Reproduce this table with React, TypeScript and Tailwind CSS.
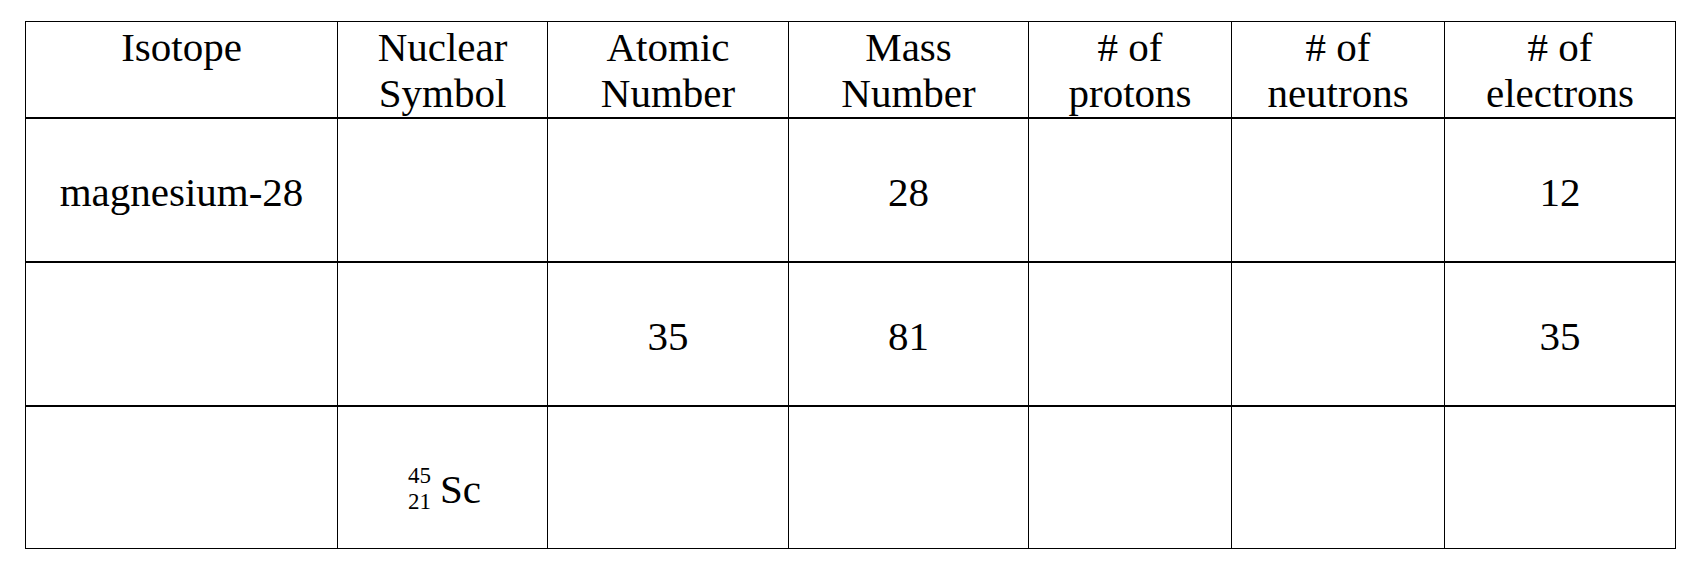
const headers = [
  ['Isotope'],
  ['Nuclear', 'Symbol'],
  ['Atomic', 'Number'],
  ['Mass', 'Number'],
  ['# of', 'protons'],
  ['# of', 'neutrons'],
  ['# of', 'electrons'],
];

const widths = ['w-[312px]', 'w-[210px]', 'w-[241px]', 'w-[240px]', 'w-[203px]', 'w-[213px]', 'w-[231px]'];

const rows = [
  ['magnesium-28', '', '', '28', '', '', '12'],
  ['', '', '35', '81', '', '', '35'],
];

const NuclearSymbol = () => (
  <span className="inline-flex items-center pt-[24px] pl-[4px]">
    <span className="flex flex-col items-end text-[23px] leading-[26px] mr-[9px]">
      <span>45</span>
      <span>21</span>
    </span>
    <span>Sc</span>
  </span>
);

const App = () => {
  return (
    <div className="w-[1699px] h-[571px] bg-white text-black font-serif text-[41px] leading-[46px] pt-[21px] pl-[25px]">
      <table className="table-fixed border-collapse border border-black font-['Liberation_Serif']">
        <colgroup>
          {widths.map((w, i) => (
            <col key={i} className={w} />
          ))}
        </colgroup>
        <thead>
          <tr className="h-[96px]">
            {headers.map((lines, i) => (
              <th key={i} className="border border-black border-b-2 align-top font-normal pt-[2px] px-1 text-center">
                {lines.map((l, j) => (
                  <div key={j}>{l}</div>
                ))}
              </th>
            ))}
          </tr>
        </thead>
        <tbody>
          {rows.map((row, r) => (
            <tr key={r} className="h-[144px] border-b-2 border-black">
              {row.map((cell, c) => (
                <td key={c} className="border-x border-black text-center align-middle pt-[4px]">
                  {cell}
                </td>
              ))}
            </tr>
          ))}
          <tr className="h-[143px]">
            {headers.map((_, c) => (
              <td key={c} className="border-x border-black text-center align-middle">
                {c === 1 ? <NuclearSymbol /> : null}
              </td>
            ))}
          </tr>
        </tbody>
      </table>
    </div>
  );
};

export default App;
